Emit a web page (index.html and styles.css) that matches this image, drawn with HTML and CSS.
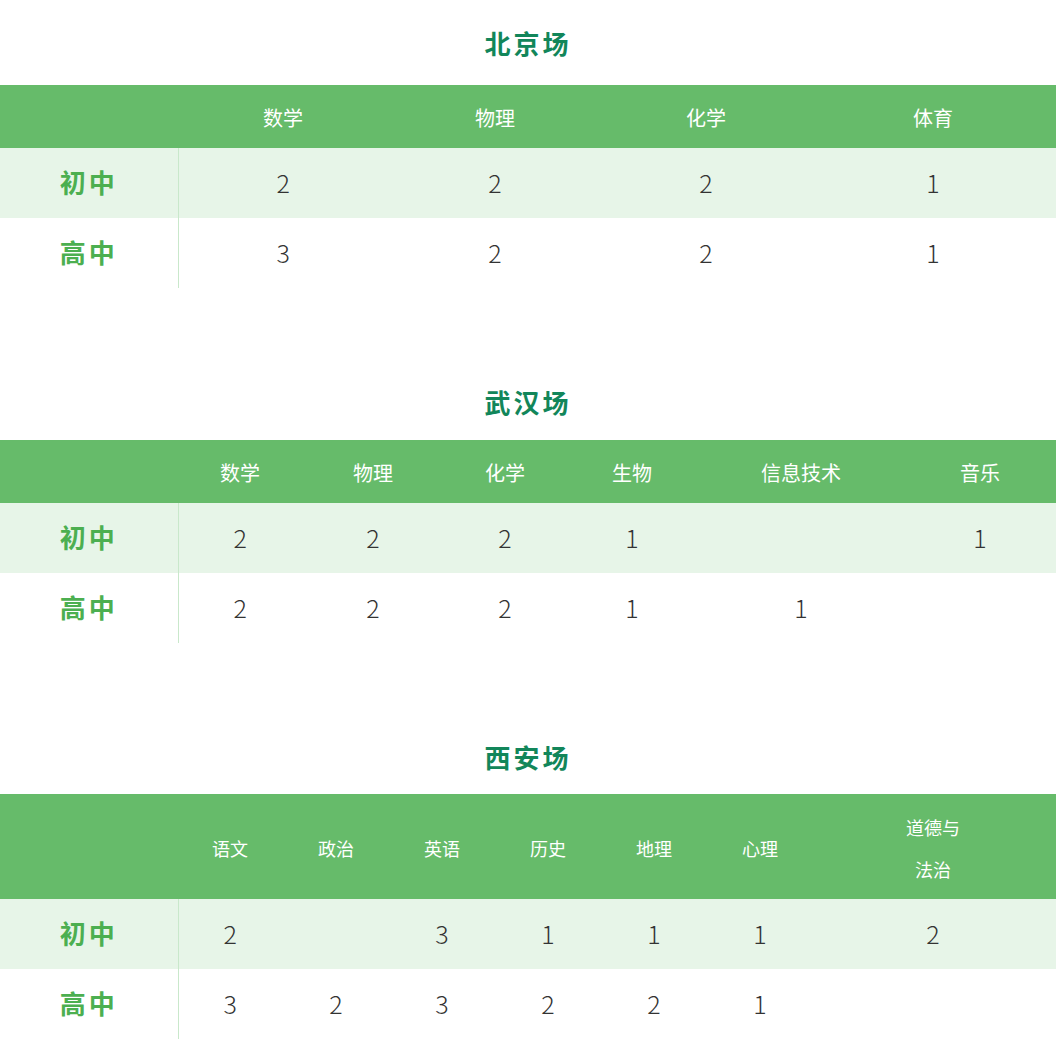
FILE: index.html
```html
<!DOCTYPE html>
<html lang="zh-CN">
<head>
<meta charset="utf-8">
<title>考场科目</title>
<link rel="stylesheet" href="styles.css">
</head>
<body>
<section class="venue venue-first">
  <h2 class="venue-title">北京场</h2>
  <table class="grid">
    <colgroup>
      <col class="c-label"><col class="bj1"><col class="bj2"><col class="bj3"><col class="bj4">
    </colgroup>
    <thead>
      <tr><th></th><th>数学</th><th>物理</th><th>化学</th><th>体育</th></tr>
    </thead>
    <tbody>
      <tr class="alt"><th class="label">初中</th><td>2</td><td>2</td><td>2</td><td>1</td></tr>
      <tr><th class="label">高中</th><td>3</td><td>2</td><td>2</td><td>1</td></tr>
    </tbody>
  </table>
</section>

<section class="venue venue-wh">
  <h2 class="venue-title">武汉场</h2>
  <table class="grid">
    <colgroup>
      <col class="c-label"><col class="wh1"><col class="wh2"><col class="wh3"><col class="wh4"><col class="wh5"><col class="wh6">
    </colgroup>
    <thead>
      <tr><th></th><th>数学</th><th>物理</th><th>化学</th><th>生物</th><th>信息技术</th><th>音乐</th></tr>
    </thead>
    <tbody>
      <tr class="alt"><th class="label">初中</th><td>2</td><td>2</td><td>2</td><td>1</td><td></td><td>1</td></tr>
      <tr><th class="label">高中</th><td>2</td><td>2</td><td>2</td><td>1</td><td>1</td><td></td></tr>
    </tbody>
  </table>
</section>

<section class="venue venue-xa">
  <h2 class="venue-title">西安场</h2>
  <table class="grid grid-small">
    <colgroup>
      <col class="c-label"><col class="xa1"><col class="xa2"><col class="xa1"><col class="xa2"><col class="xa1"><col class="xa2"><col class="xa7">
    </colgroup>
    <thead>
      <tr><th></th><th>语文</th><th>政治</th><th>英语</th><th>历史</th><th>地理</th><th>心理</th><th>道德与<br>法治</th></tr>
    </thead>
    <tbody>
      <tr class="alt"><th class="label">初中</th><td>2</td><td></td><td>3</td><td>1</td><td>1</td><td>1</td><td>2</td></tr>
      <tr><th class="label">高中</th><td>3</td><td>2</td><td>3</td><td>2</td><td>2</td><td>1</td><td></td></tr>
    </tbody>
  </table>
</section>
</body>
</html>
```

FILE: styles.css
```css
html, body {
  margin: 0;
  padding: 0;
  background: #ffffff;
}

body {
  width: 1056px;
  font-family: "Noto Sans CJK SC", "Noto Sans", sans-serif;
  color: #333333;
}

.venue-first {
  padding-top: 26px;
}

.venue-wh {
  margin-top: 97px;
}

.venue-xa {
  margin-top: 97px;
}

.venue-title {
  margin: 0 0 25px;
  font-size: 26px;
  line-height: 34px;
  font-weight: 700;
  letter-spacing: 3px;
  text-align: center;
  color: #12865a;
}

.venue-wh .venue-title {
  margin-bottom: 21px;
}

.venue-xa .venue-title {
  margin-bottom: 20px;
}

.grid {
  width: 1056px;
  border-collapse: collapse;
  border-spacing: 0;
  table-layout: fixed;
}

.grid thead tr {
  height: 63px;
}

.grid thead th {
  padding: 2px 0 0;
  background: #66bb6a;
  color: #ffffff;
  font-size: 20px;
  font-weight: 400;
  line-height: 28px;
  text-align: center;
  vertical-align: middle;
}

.grid-small thead tr {
  height: 105px;
}

.grid-small thead th {
  font-size: 18px;
  line-height: 42px;
}

.grid-small th:last-child,
.grid-small td:last-child {
  padding-right: 4px;
}

.grid tbody tr {
  height: 70px;
}

.grid tbody tr.alt {
  background: #e7f5e8;
}

.grid .label {
  padding: 0 0 3px;
  border-right: 1px solid #c9e8cb;
  color: #4caf50;
  font-size: 26px;
  font-weight: 700;
  letter-spacing: 3px;
  text-align: center;
  vertical-align: middle;
}

.grid td {
  padding: 0 0 3px;
  font-size: 25px;
  font-weight: 300;
  color: #333333;
  text-align: center;
  vertical-align: middle;
}

.c-label { width: 178px; }

.bj1 { width: 210px; }
.bj2 { width: 214px; }
.bj3 { width: 208px; }
.bj4 { width: 246px; }

.wh1 { width: 124px; }
.wh2 { width: 142px; }
.wh3 { width: 122px; }
.wh4 { width: 132px; }
.wh5 { width: 206px; }
.wh6 { width: 152px; }

.xa1 { width: 104px; }
.xa2 { width: 108px; }
.xa7 { width: 242px; }
```
